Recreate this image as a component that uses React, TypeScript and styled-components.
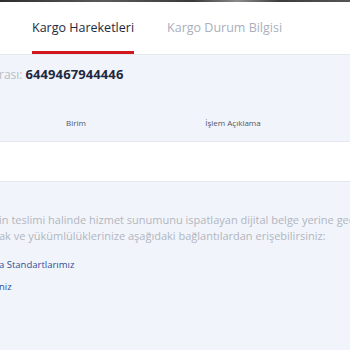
import styled, { createGlobalStyle } from "styled-components";

const GlobalStyle = createGlobalStyle`
  html, body {
    margin: 0;
    padding: 0;
    background: #f1f4fa;
    overflow: hidden;
  }
  body {
    font-family: "Open Sans", "Noto Sans", sans-serif;
  }
`;

const Page = styled.div`
  width: 350px;
  height: 350px;
  display: flex;
  flex-direction: column;
  background: #f1f4fa;
  overflow: hidden;
`;

const TopStrip = styled.div`
  height: 2px;
  background: linear-gradient(90deg, #2e2e2e 0%, #5a5a5a 30%, #3a3a3a 55%, #8a8a8a 68%, #3c3c3c 80%, #555 100%);
`;

const Header = styled.div`
  display: flex;
  gap: 33px;
  padding-left: 32px;
  height: 52px;
  background: #ffffff;
  border-bottom: 1px solid #e4e8ef;
`;

const Tab = styled.div<{ $active?: boolean }>`
  display: flex;
  align-items: center;
  height: 100%;
  box-sizing: border-box;
  padding-top: 2px;
  font-size: 12.5px;
  font-weight: 500;
  white-space: nowrap;
  color: ${(p) => (p.$active ? "#1e2940" : "#a9afbd")};
  border-bottom: 3px solid ${(p) => (p.$active ? "#d3161d" : "transparent")};
`;

const NumberRow = styled.div`
  display: flex;
  align-items: baseline;
  gap: 3px;
  margin-top: 10px;
  margin-left: -1px;
  height: 20px;
  white-space: nowrap;
`;

const Label = styled.span`
  font-size: 12px;
  color: #b9bdc7;
`;

const Number = styled.span`
  font-size: 13px;
  font-weight: 700;
  color: #1e2940;
  letter-spacing: 0.1px;
`;

const TableHead = styled.div`
  display: grid;
  grid-template-columns: 152px 162px 1fr;
  align-items: center;
  height: 38px;
  margin-top: 18px;
  border-bottom: 1px solid #e3e7ee;
`;

const HeadCell = styled.div`
  text-align: center;
  font-size: 8px;
  color: #505666;
  white-space: nowrap;
`;

const TableRow = styled.div`
  height: 39px;
  background: #ffffff;
  border-bottom: 1px solid #e3e7ee;
`;

const Notice = styled.div`
  display: flex;
  flex-direction: column;
  margin-top: 30px;
  margin-left: -1px;
`;

const NoticeLine = styled.div`
  font-size: 11px;
  line-height: 16px;
  color: #b1b6c1;
  white-space: nowrap;
`;

const Links = styled.div`
  display: flex;
  flex-direction: column;
  gap: 9px;
  margin-top: 14px;
  margin-left: -1px;
`;

const LinkItem = styled.a`
  font-size: 9.5px;
  line-height: 13px;
  font-weight: 500;
  color: #2f4f9c;
  text-decoration: none;
  white-space: nowrap;
`;

export default function App() {
  return (
    <>
      <GlobalStyle />
      <Page>
        <TopStrip />
        <Header>
          <Tab $active>Kargo Hareketleri</Tab>
          <Tab>Kargo Durum Bilgisi</Tab>
        </Header>
        <NumberRow>
          <Label>rası:</Label>
          <Number>6449467944446</Number>
        </NumberRow>
        <TableHead>
          <HeadCell>Birim</HeadCell>
          <HeadCell>İşlem Açıklama</HeadCell>
          <HeadCell />
        </TableHead>
        <TableRow />
        <Notice>
          <NoticeLine>in teslimi halinde hizmet sunumunu ispatlayan dijital belge yerine geçer</NoticeLine>
          <NoticeLine>ak ve yükümlülüklerinize aşağıdaki bağlantılardan erişebilirsiniz:</NoticeLine>
        </Notice>
        <Links>
          <LinkItem href="#">a Standartlarımız</LinkItem>
          <LinkItem href="#">niz</LinkItem>
        </Links>
      </Page>
    </>
  );
}
